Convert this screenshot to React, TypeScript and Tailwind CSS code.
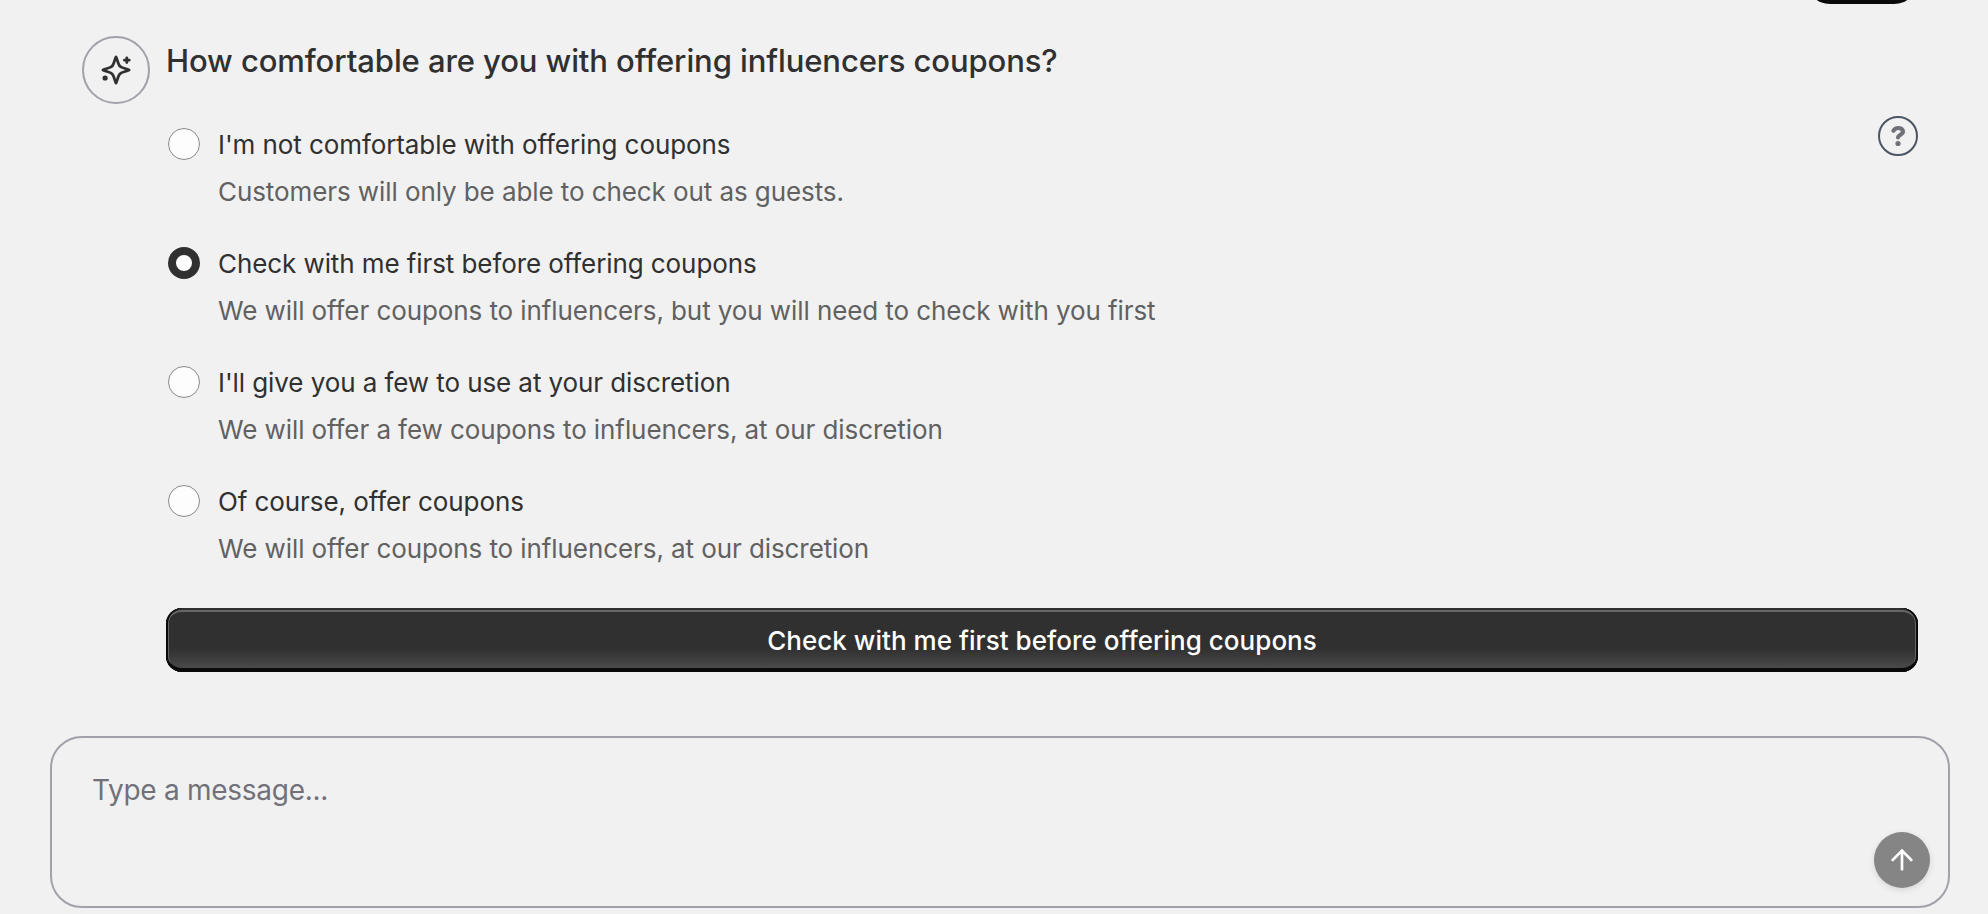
import {useState} from "react";
import clsx from "clsx";
import {ArrowUp} from "lucide-react";

interface Option {
  id: string;
  label: string;
  description: string;
}

const OPTIONS: Option[] = [
  {
    id: "none",
    label: "I'm not comfortable with offering coupons",
    description: "Customers will only be able to check out as guests.",
  },
  {
    id: "check",
    label: "Check with me first before offering coupons",
    description:
      "We will offer coupons to influencers, but you will need to check with you first",
  },
  {
    id: "few",
    label: "I'll give you a few to use at your discretion",
    description: "We will offer a few coupons to influencers, at our discretion",
  },
  {
    id: "always",
    label: "Of course, offer coupons",
    description: "We will offer coupons to influencers, at our discretion",
  },
];

function SparkleIcon() {
  return (
    <svg
      width={32}
      height={32}
      viewBox="0 0 32 32"
      fill="none"
      stroke="currentColor"
      strokeWidth={2.8}
      strokeLinecap="round"
      strokeLinejoin="round"
    >
      <path d="M16 2.9C17.3 5.5 17.9 9.2 19.2 11.2C19.6 11.9 20.1 12.4 20.8 12.8C22.8 14.1 26.5 14.7 29.1 16C26.5 17.3 22.8 17.9 20.8 19.2C20.1 19.6 19.6 20.1 19.2 20.8C17.9 22.8 17.3 26.5 16 29.1C14.7 26.5 14.1 22.8 12.8 20.8C12.4 20.1 11.9 19.6 11.2 19.2C9.2 17.9 5.5 17.3 2.9 16C5.5 14.7 9.2 14.1 11.2 12.8C11.9 12.4 12.4 11.9 12.8 11.2C14.1 9.2 14.7 5.5 16 2.9Z" />
      <path d="M26.8 3.8v4.8M24.4 6.2h4.8" />
      <circle cx="5.1" cy="24" r="2.6" fill="currentColor" stroke="none" />
    </svg>
  );
}

function HelpIcon() {
  return (
    <svg
      width={36}
      height={36}
      viewBox="0 0 36 36"
      fill="none"
      stroke="currentColor"
      strokeWidth={4.2}
      strokeLinecap="round"
      strokeLinejoin="round"
    >
      <path d="M13.4 12.7C14.5 10.7 16.1 10 18.2 10C21 10 23 11.4 23 13.6C23 16.7 18.4 16.6 18 19.4" />
      <circle cx="18" cy="25.5" r="2.6" fill="currentColor" stroke="none" />
    </svg>
  );
}

interface RadioRowProps {
  option: Option;
  checked: boolean;
  onSelect: (id: string) => void;
}

function RadioRow({option, checked, onSelect}: RadioRowProps) {
  return (
    <label className="flex h-[119px] cursor-pointer items-start gap-[18px]">
      <input
        type="radio"
        name="coupons"
        className="sr-only"
        checked={checked}
        onChange={() => onSelect(option.id)}
      />
      <span
        className={clsx(
          "size-8 shrink-0 rounded-full",
          checked
            ? "border-8 border-[#303030] bg-white"
            : "border border-[#8a8a8a] bg-[#fdfdfd]",
        )}
      />
      <span className="flex flex-col text-[26px] leading-[40px] tracking-[-0.085px]">
        <span className="mt-[-3px] text-[#303030]">{option.label}</span>
        <span className="mt-[7px] text-[#616161]">{option.description}</span>
      </span>
    </label>
  );
}

export default function App() {
  const [selected, setSelected] = useState("check");
  const [message, setMessage] = useState("");

  const current = OPTIONS.find((o) => o.id === selected);

  return (
    <div className="flex h-[914px] w-full flex-col overflow-hidden bg-[#f1f1f1] font-['Inter',sans-serif]">
      {/* tail of the previous reply */}
      <div className="flex h-9 shrink-0 justify-end pr-[70px]">
        <div className="mt-[-60px] h-16 w-28 rounded-3xl bg-[#0a0a0a]" />
      </div>

      <div className="flex shrink-0 gap-4 pr-[70px] pl-[82px]">
        <div className="flex size-[68px] shrink-0 items-center justify-center rounded-full border-2 border-[#a1a1aa] text-[#303030]">
          <SparkleIcon />
        </div>

        <div className="flex flex-1 flex-col">
          <h2 className="mt-[5px] text-[31px] leading-[40px] font-[450] tracking-[-0.09px] text-[#303030]">
            How comfortable are you with offering influencers coupons?
          </h2>

          <div className="mt-[35px] flex items-start justify-between">
            <div className="mt-3 pl-0.5">
              {OPTIONS.map((option) => (
                <RadioRow
                  key={option.id}
                  option={option}
                  checked={option.id === selected}
                  onSelect={setSelected}
                />
              ))}
            </div>
            <button className="flex size-10 items-center justify-center rounded-full border-2 border-[#4b5563] text-[#71717a]">
              <HelpIcon />
            </button>
          </div>

          <button className="mt-1 h-16 w-full rounded-2xl bg-[linear-gradient(to_bottom,#303030_63%,#4f4f4f)] text-[26px] font-medium tracking-[0.04px] text-white shadow-[inset_2px_0_0_#0a0a0a,inset_-2px_0_0_#0a0a0a,inset_0_-4px_0_#0a0a0a,inset_0_2px_0_#303030,inset_0_4px_0_#666,inset_3px_0_0_#666,inset_-3px_0_0_#666]">
            {current?.label}
          </button>
        </div>
      </div>

      <div className="mt-16 mr-[38px] ml-[50px] flex h-[172px] shrink-0 items-end rounded-[32px] border-2 border-[#a1a1aa] pr-[18px] pb-[18px] pl-10">
        <textarea
          className="mb-[-18px] h-[136px] flex-1 resize-none text-[28px] leading-[40px] tracking-[-0.28px] text-[#71717a] outline-none placeholder:text-[#71717a]"
          placeholder="Type a message..."
          value={message}
          onChange={(e) => setMessage(e.target.value)}
        />
        <button className="flex size-14 items-center justify-center rounded-full bg-[#858585] text-white shadow-[0_2px_6px_rgba(0,0,0,0.12)]">
          <ArrowUp size={32} strokeWidth={2} />
        </button>
      </div>
    </div>
  );
}
